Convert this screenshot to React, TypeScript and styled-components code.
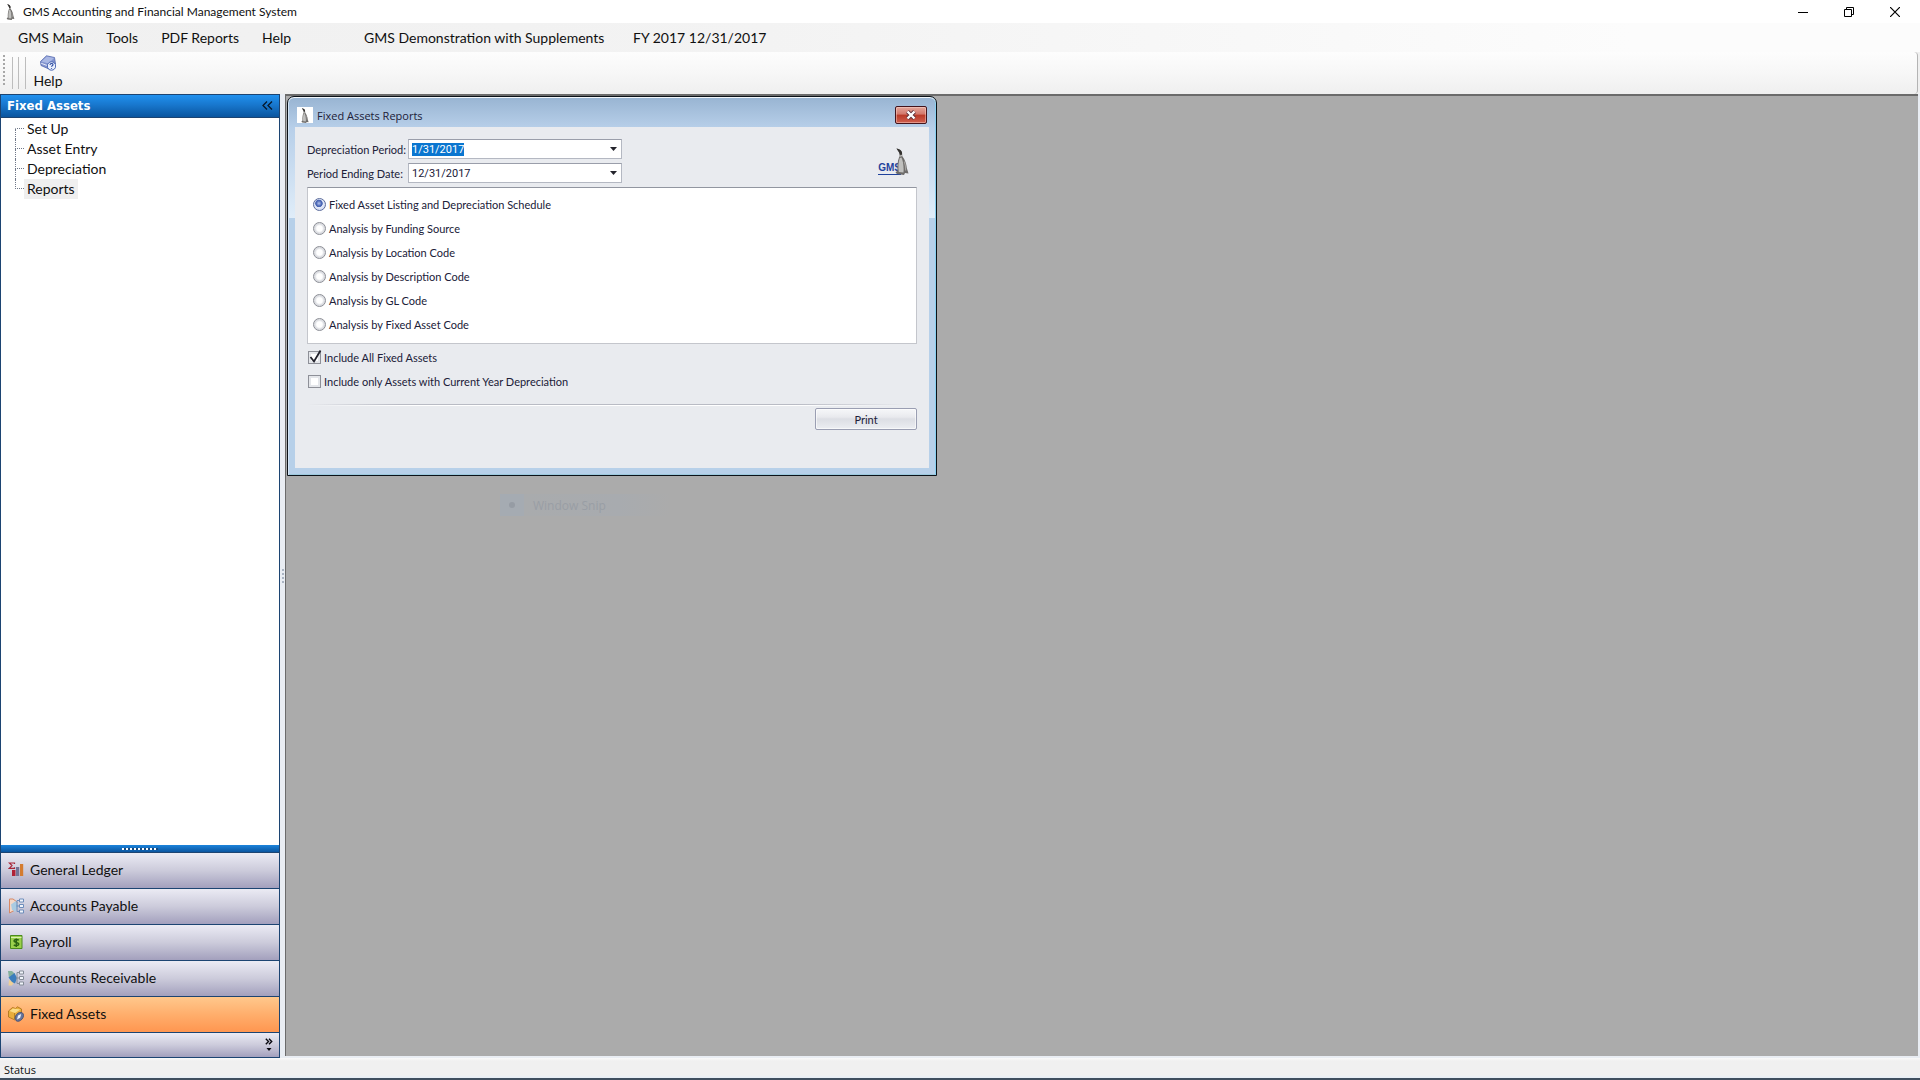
import React, { useEffect, useRef, useState } from "react";
import styled, { createGlobalStyle, css } from "styled-components";

const uiFont = `Lato, "Liberation Sans", sans-serif`;
const smallFont = `"Open Sans", "Liberation Sans", sans-serif`;
const fieldFont = `Roboto, "Liberation Sans", sans-serif`;
const navy = "#1c4472";

const Global = createGlobalStyle`
  *, *::before, *::after { box-sizing: border-box; }
  body { margin: 0; background: #f0f0f0; font-family: ${uiFont}; font-size: 14px; color: #101010; }
  button, input { font: inherit; color: inherit; margin: 0; padding: 0; }
  ul { list-style: none; margin: 0; padding: 0; }
  svg { display: block; }
`;

const Page = styled.div`
  display: flex;
  flex-direction: column;
  height: 100vh;
`;

const TitleBar = styled.header`
  display: flex;
  align-items: center;
  gap: 6px;
  height: 23px;
  padding-left: 4px;
  background: #fff;
`;

const AppTitle = styled.h1`
  flex: 1;
  margin: 0;
  font-size: 12px;
  font-weight: 400;
`;

const WindowButtons = styled.div`
  display: flex;
  padding-right: 2px;
`;

const WindowButton = styled.button`
  display: grid;
  place-items: center;
  width: 46px;
  height: 20px;
  border: 0;
  background: none;
`;

const MenuBar = styled.nav`
  display: flex;
  align-items: center;
  gap: 1px;
  height: 29px;
  padding-left: 7px;
  background: linear-gradient(90deg, #f0f0f0, #f3f3f3 40%, #fcfcfc 85%);
`;

const MenuItem = styled.button`
  padding: 0 11px;
  border: 0;
  background: none;
  line-height: 20px;
`;

const Company = styled.span`
  min-width: 268px;
  margin-left: 50px;
  padding: 0 11px;
`;

const FiscalYear = styled.span`
  padding: 0 11px;
`;

const ToolBar = styled.div`
  display: flex;
  height: 42px;
  margin-right: 2px;
  padding: 3px 0 0 3px;
  border-right: 1px solid #b4b4b4;
  border-radius: 0 4px 4px 0;
  background: linear-gradient(#fdfdfd, #f7f7f7 50%, #efefef);
`;

const DotGrip = styled.span`
  width: 2px;
  height: 32px;
  margin-right: 7px;
  background: repeating-linear-gradient(#a8a8a8 0 2px, transparent 2px 4px);
`;

const LineGrip = styled.span`
  width: 14px;
  height: 32px;
  margin: 2px 6px 0 0;
  border: solid #bdbdbd;
  border-width: 0 1px;
  background: linear-gradient(#bdbdbd, #bdbdbd) 5px 0 / 1px 100% no-repeat;
`;

const ToolButton = styled.button`
  display: flex;
  flex-direction: column;
  align-items: center;
  width: 32px;
  border: 0;
  background: none;
  line-height: 20px;
  height: 36px;
`;

const Workspace = styled.div`
  display: flex;
  flex: 1;
  min-height: 0;
  background: #e9edf3;
`;

const SidePanel = styled.aside`
  display: flex;
  flex-direction: column;
  width: 280px;
  border: solid ${navy};
  border-width: 0 1px;
`;

const PanelHeader = styled.div`
  display: flex;
  align-items: center;
  justify-content: space-between;
  height: 24px;
  padding: 0 6px 2px;
  border: solid ${navy};
  border-width: 1px 0;
  background: linear-gradient(#2090ee, #1877cd 45%, #0a559f);
  color: #fff;
`;

const PanelTitle = styled.h2`
  margin: 0;
  font: bold 13px "DejaVu Sans Condensed", sans-serif;
`;

const IconButton = styled.button`
  border: 0;
  background: none;
`;

const Tree = styled.ul`
  flex: 1;
  padding: 1px 0 0 14px;
  background: #fff;
`;

const TreeRow = styled.li`
  display: flex;
  height: 20px;
`;

const Branch = styled.span<{ $first?: boolean; $last?: boolean }>`
  display: grid;
  grid-template-rows: 10px 10px;
  width: 9px;
  &::before, &::after { content: ""; border-left: 1px dotted #707888; }
  &::before { border-bottom: 1px dotted #707888; }
  ${p => p.$first && css`&::before { border-left-color: transparent; }`}
  ${p => p.$last && css`&::after { border-left-color: transparent; }`}
`;

const TreeLink = styled.a<{ $active?: boolean }>`
  padding: 0 3px;
  background: ${p => (p.$active ? "#efefef" : "none")};
  color: inherit;
  line-height: 20px;
  text-decoration: none;
`;

const SplitBar = styled.div`
  display: grid;
  place-items: center;
  height: 8px;
  border-bottom: 1px solid ${navy};
  background: linear-gradient(#1c84dc, #0a559f);
  &::after {
    content: "";
    width: 36px;
    height: 2px;
    background: repeating-linear-gradient(90deg, #fff 0 2px, #164a80 2px 4px);
  }
`;

const NavButton = styled.button<{ $active?: boolean }>`
  display: flex;
  align-items: center;
  gap: 6px;
  width: 100%;
  height: 36px;
  padding: 0 7px 2px;
  border: 0;
  border-bottom: 1px solid ${navy};
  background: ${p => (p.$active
    ? "linear-gradient(#ffc88c, #ffae6c 50%, #ff9650)"
    : "linear-gradient(#ebebf4, #cccbdb 50%, #a3a0bd)")};
`;

const NavOverflow = styled.div`
  display: flex;
  justify-content: flex-end;
  height: 25px;
  padding: 4px 6px;
  border-bottom: 1px solid ${navy};
  background: linear-gradient(#ebebf4, #cccbdb 50%, #a3a0bd);
`;

const Splitter = styled.div`
  display: grid;
  place-items: center;
  width: 5px;
  &::after {
    content: "";
    width: 2px;
    height: 14px;
    background: repeating-linear-gradient(#aab4c2 0 2px, transparent 2px 4px);
  }
`;

const Desktop = styled.main`
  position: relative;
  flex: 1;
  margin: 0 2px 2px 0;
  border: solid #6b6b6b;
  border-width: 2px 0 0 1px;
  background: #ababab;
`;

const GhostMenu = styled.div`
  position: absolute;
  top: 398px;
  left: 214px;
  display: flex;
  align-items: center;
  gap: 18px;
  width: 170px;
  height: 22px;
  background: linear-gradient(90deg, #a5abb2 0 24px, #a9abad 24px, #a8abaf 70%, #ababab);
  color: #999ea5;
  font-family: ${smallFont};
  font-size: 12px;
  &::before {
    content: "";
    width: 6px;
    height: 6px;
    margin-left: 9px;
    border-radius: 3px;
    background: #969ca4;
  }
`;

const Dialog = styled.section`
  position: absolute;
  top: 0;
  left: 1px;
  width: 650px;
  padding: 0 7px 7px;
  border: 1px solid #0c1218;
  border-radius: 7px 7px 0 0;
  background: linear-gradient(#98b4d2, #b7cfe9 31px, #e0edf9 121px, #b7d0e9 121px);
  box-shadow: inset 0 1px #f2f7fc, inset 1px 0 #d3e4f4, inset -1px 0 #88d0f0, inset 0 -1px #9cc8dc;
  color: #202038;
  font-size: 11px;
`;

const DialogBar = styled.div`
  display: flex;
  align-items: center;
  gap: 4px;
  height: 30px;
  padding: 6px 2px 0;
`;

const DialogIcon = styled.span`
  display: grid;
  place-items: center;
  width: 16px;
  height: 16px;
  background: #fff;
`;

const DialogTitle = styled.h2`
  flex: 1;
  margin: 0;
  font: 400 11px ${smallFont};
`;

const CloseButton = styled.button`
  display: grid;
  place-items: center;
  align-self: flex-start;
  margin-top: 3px;
  width: 32px;
  height: 18px;
  border: 1px solid #43141c;
  border-radius: 2px;
  background: linear-gradient(#e3a69b, #d3786b 45%, #b93a28 50%, #d0604f);
  box-shadow: inset 0 0 0 1px rgba(255, 220, 210, 0.45);
`;

const Form = styled.form`
  padding: 12px 12px 38px;
  background: #e9ebef;
`;

const FormHead = styled.div`
  display: flex;
  align-items: center;
  justify-content: space-between;
  margin-bottom: 4px;
`;

const Fields = styled.div`
  display: grid;
  grid-template-columns: 101px 214px;
  grid-auto-rows: 20px;
  row-gap: 4px;
  align-items: center;
`;

const ComboBox = styled.div`
  display: grid;
  grid-template-columns: 1fr 15px;
  height: 20px;
  border: 1px solid #b4b8c2;
  border-top-color: #9a9eaa;
  background: #fff;
`;

const ComboInput = styled.input`
  min-width: 0;
  padding-left: 3px;
  border: 0;
  outline: 0;
  background: none;
  font-family: ${fieldFont};
  &::selection { background: #0a76d0; color: #fff; }
`;

const ComboButton = styled.button`
  display: grid;
  place-items: center;
  border: 0;
  background: none;
`;

const Brand = styled.div`
  display: flex;
  align-items: flex-end;
  margin-right: 8px;
  color: #1f429c;
  font: bold 10px/12px "Liberation Sans", sans-serif;
`;

const BrandName = styled.span`
  margin-right: -6px;
  border-bottom: 1px solid #1f429c;
`;

const ReportList = styled.fieldset`
  margin: 0;
  padding: 4px 5px 7px;
  border: 1px solid #c4c6cc;
  border-top-color: #9296a0;
  background: #fff;
`;

const Option = styled.label`
  display: flex;
  align-items: center;
  gap: 3px;
  height: 24px;
`;

const Radio = styled.input`
  appearance: none;
  width: 13px;
  height: 13px;
  border: 1px solid #8c8e96;
  border-radius: 50%;
  background: radial-gradient(#fff 35%, #d8dadf 60%, #f4f4f6);
  &:checked {
    border-color: #5c6c9c;
    background: radial-gradient(circle at 45% 40%, #b4c4ee 0, #4a66b4 30%, #4a66b4 38%, #e4eaf8 46%, #c4d0ec);
  }
`;

const Checks = styled.div`
  padding: 1px 0 11px 1px;
`;

const CheckCell = styled.span`
  display: grid;
  width: 13px;
  height: 13px;
  & > * { grid-area: 1 / 1; }
  & > svg { visibility: hidden; pointer-events: none; overflow: visible; }
  & > input:checked + svg { visibility: visible; }
`;

const CheckBox = styled.input`
  appearance: none;
  width: 13px;
  height: 13px;
  border: 1px solid #8e9098;
  background: #fff;
  box-shadow: inset 0 0 0 2px #e4e6ea;
`;

const Divider = styled.hr`
  height: 2px;
  margin: 0 0 2px;
  border: 0;
  background:
    linear-gradient(90deg, transparent, #b9bbc4 15%, #b9bbc4 80%, transparent 98%) 0 0 / 100% 1px no-repeat,
    linear-gradient(90deg, transparent, #fff 15%, #fff 80%, transparent 98%) 0 1px / 100% 1px no-repeat;
`;

const Actions = styled.div`
  display: flex;
  justify-content: flex-end;
`;

const PrintButton = styled.button`
  width: 102px;
  height: 22px;
  border: 1px solid #9a9eb2;
  border-radius: 2px;
  background: linear-gradient(#f6f7f9, #e9eaee 40%, #dcdee4 50%, #eceef2);
  box-shadow: inset 0 0 0 1px rgba(255, 255, 255, 0.6);
`;

const StatusBar = styled.footer`
  height: 22px;
  padding-left: 4px;
  border-bottom: 2px solid #3f4e5e;
  background: linear-gradient(#fafafa, #f0f0f0 3px, #f0f0f0 17px, #e6eef6);
  font: 11px/24px ${smallFont};
`;

const Penguin = ({ w = 14, h = 27 }: { w?: number; h?: number }) => (
  <svg width={w} height={h} viewBox="0 0 14 27" aria-hidden="true">
    <path d="M1.500.500C4 1 6.500 2 7 4.500 7.300 6 7 7 7.500 8.500 10 11.500 11.500 16 11.800 20L13.500 25.500 10 25 9 27 2 26 .500 24.500 2.500 22.500C2.200 18 2.500 13 4 9.500 5 7.500 4.800 5.500 3.500 3.500Z" fill="#6e6c6a" />
    <path d="M4.800 10C3.300 14 3 19 3.800 24L8.500 24.500C9 19 8 13 6.500 9.500Z" fill="#c0c0be" />
    <path d="M9.200 13.500C10.400 16.500 10.800 19.500 10.600 22.500" stroke="#a2a09e" strokeWidth="1.200" fill="none" />
    <path d="M1.500.500C4 1 6.500 2 7 4.500L7 6.500 4.800 6.800C4.700 5.500 4.300 4.500 3.500 3.500Z" fill="#33312f" />
    <path d="M4.600 8.200 7.200 7.600" stroke="#dededc" strokeWidth=".9" />
  </svg>
);

const Arrow = () => (
  <svg width="7" height="4" viewBox="0 0 7 4" aria-hidden="true"><path d="M0 0h7L3.500 4Z" fill="#24242c" /></svg>
);

const HelpBookIcon = () => (
  <svg width="16" height="16" viewBox="0 0 16 16" aria-hidden="true">
    <path d="M.5 6.500 6.500.8 14.500 2.500 15.500 9 9 14 1 10.500Z" fill="#8394cf" stroke="#5468ae" strokeWidth=".8" />
    <path d="M1.500 6.500 6.800 1.600 14 3 8.500 8.400Z" fill="#aab8e4" />
    <path d="M1.200 8.300 8.500 11" stroke="#e6eaf8" />
    <circle cx="11.500" cy="11" r="4.200" fill="#eaf0fd" stroke="#4864b2" />
    <path d="M10 10c0-2 3-2 3-.3 0 1-1.500 1-1.500 2.100M11.500 13v.8" stroke="#2d4aa0" strokeWidth="1.100" fill="none" />
  </svg>
);

const LedgerIcon = () => (
  <svg width="16" height="16" viewBox="0 0 16 16" aria-hidden="true">
    <path d="M6.500 2V1H1.300l2.700 2.600-2.700 2.700h5.200v-1" fill="none" stroke="#a82638" strokeWidth="1.200" />
    <path d="M4 8h3.500v6H4z" fill="#b02236" /><path d="M8 5h3.200v9H8z" fill="#737496" /><path d="M12 2h3.200v12H12z" fill="#d47c30" />
  </svg>
);

const Boxes = ({ color }: { color: string }) => (
  <g fill="#f0f4fa" stroke={color}>
    <path d="M8.500 8h3M9 2.500v11M9 2.500h2.500M9 13.500h2.500" fill="none" />
    <path d="M11.500 1h4v3h-4zM11.500 6.500h4v3h-4zM11.500 12h4v3h-4z" />
  </g>
);

const PayableIcon = () => (
  <svg width="16" height="16" viewBox="0 0 16 16" aria-hidden="true">
    <path d="M1.500 1H5l4 3-2 8-5.500 3Z" fill="#f3d8c8" stroke="#d88864" />
    <path d="M3 6.500 8 3l2.500 5L7 14l-3-2.500Z" fill="#a9cbe2" />
    <Boxes color="#6d8dbb" />
  </svg>
);

const ReceivableIcon = () => (
  <svg width="16" height="16" viewBox="0 0 16 16" aria-hidden="true">
    <path d="M0 1h4l3 3-6 4Z" fill="#84b09c" /><path d="M1 10 6 12 4 15.500H.5Z" fill="#edcf98" />
    <path d="M.5 7.500 6.500 3 9 8l-2 5.500-3-1.500Z" fill="#3c7dbc" />
    <Boxes color="#858d98" />
  </svg>
);

const PayrollIcon = () => (
  <svg width="16" height="16" viewBox="0 0 16 16" aria-hidden="true">
    <path d="M2.500 1.500h11.500v13H2.500z" fill="#9bd04c" stroke="#4a8a1e" />
    <path d="M3 3.500h10.500" stroke="#d9f0b0" />
    <path d="M10.800 6.200C9.500 5 6 5.200 6 7s4.800 1.200 4.800 3-3.500 2-5 .8M8.300 4.500v8.500" fill="none" stroke="#2c6412" strokeWidth="1.500" />
  </svg>
);

const AssetsIcon = () => (
  <svg width="16" height="16" viewBox="0 0 16 16" aria-hidden="true">
    <path d="M.5 5 4.500 1.500l3 1L9.500.8l4 2.200V9L6.500 13.800.5 11Z" fill="#e9ae3c" stroke="#a87018" strokeWidth=".8" />
    <path d="M1.500 5 5 2.500 12.500 3.500 7 7Z" fill="#fbdc86" />
    <path d="M6.500 7v6" stroke="#a87018" strokeWidth=".7" />
    <ellipse cx="11.300" cy="10.800" rx="3.600" ry="5" transform="rotate(40 11.300 10.800)" fill="#66759c" stroke="#454f72" strokeWidth=".8" />
    <path d="m9 13.500 1-4 3.200-1.500-1 3.800Z" fill="#edf2fb" />
  </svg>
);

const tree = ["Set Up", "Asset Entry", "Depreciation", "Reports"];
const modules = [
  { name: "General Ledger", icon: <LedgerIcon /> },
  { name: "Accounts Payable", icon: <PayableIcon /> },
  { name: "Payroll", icon: <PayrollIcon /> },
  { name: "Accounts Receivable", icon: <ReceivableIcon /> },
  { name: "Fixed Assets", icon: <AssetsIcon /> },
];
const reports = [
  "Fixed Asset Listing and Depreciation Schedule",
  "Analysis by Funding Source",
  "Analysis by Location Code",
  "Analysis by Description Code",
  "Analysis by GL Code",
  "Analysis by Fixed Asset Code",
];

function Combo({ id, value, selected }: { id: string; value: string; selected?: boolean }) {
  const ref = useRef<HTMLInputElement>(null);
  useEffect(() => {
    if (selected) {
      ref.current?.focus();
      ref.current?.select();
    }
  }, [selected]);
  return (
    <ComboBox>
      <ComboInput id={id} ref={ref} role="combobox" aria-expanded={false} defaultValue={value} />
      <ComboButton type="button" tabIndex={-1} aria-label="Open list"><Arrow /></ComboButton>
    </ComboBox>
  );
}

function ReportsDialog() {
  const [report, setReport] = useState(0);
  return (
    <Dialog role="dialog" aria-labelledby="dialog-title">
      <DialogBar>
        <DialogIcon><Penguin w={8} h={15} /></DialogIcon>
        <DialogTitle id="dialog-title">Fixed Assets Reports</DialogTitle>
        <CloseButton aria-label="Close dialog">
          <svg width="12" height="10" viewBox="0 0 12 10">
            <path d="m2.500 1.500 7 7m0-7-7 7" stroke="#5c3038" strokeWidth="4" />
            <path d="m2.500 1.500 7 7m0-7-7 7" stroke="#fff" strokeWidth="2.400" />
          </svg>
        </CloseButton>
      </DialogBar>
      <Form onSubmit={e => e.preventDefault()}>
        <FormHead>
          <Fields>
            <label htmlFor="period">Depreciation Period:</label>
            <Combo id="period" value="1/31/2017" selected />
            <label htmlFor="ending">Period Ending Date:</label>
            <Combo id="ending" value="12/31/2017" />
          </Fields>
          <Brand><BrandName>GMS</BrandName><Penguin /></Brand>
        </FormHead>
        <ReportList aria-label="Report">
          {reports.map((name, i) => (
            <Option key={name}>
              <Radio type="radio" name="report" checked={report === i} onChange={() => setReport(i)} />
              {name}
            </Option>
          ))}
        </ReportList>
        <Checks>
          {["Include All Fixed Assets", "Include only Assets with Current Year Depreciation"].map((name, i) => (
            <Option key={name}>
              <CheckCell>
                <CheckBox type="checkbox" defaultChecked={i === 0} />
                <svg width="13" height="13" viewBox="0 0 13 13"><path d="m2.500 6 3.500 4.500L12.500-.5" fill="none" stroke="#22222c" strokeWidth="1.800" /></svg>
              </CheckCell>
              {name}
            </Option>
          ))}
        </Checks>
        <Divider />
        <Actions><PrintButton>Print</PrintButton></Actions>
      </Form>
    </Dialog>
  );
}

export default function App() {
  return (
    <Page>
      <Global />
      <TitleBar>
        <Penguin w={13} h={16} />
        <AppTitle>GMS Accounting and Financial Management System</AppTitle>
        <WindowButtons>
          <WindowButton aria-label="Minimize"><svg width="10" height="10"><path d="M0 5.500h10" stroke="#000" /></svg></WindowButton>
          <WindowButton aria-label="Restore"><svg width="10" height="10" fill="none" stroke="#000"><path d="M.5 2.500h7v7h-7zM2.500 2.500v-2h7v7h-2" /></svg></WindowButton>
          <WindowButton aria-label="Close"><svg width="10" height="10"><path d="m0 0 10 10M10 0 0 10" stroke="#000" strokeWidth="1.200" /></svg></WindowButton>
        </WindowButtons>
      </TitleBar>
      <MenuBar>
        {["GMS Main", "Tools", "PDF Reports", "Help"].map(m => <MenuItem key={m}>{m}</MenuItem>)}
        <Company>GMS Demonstration with Supplements</Company>
        <FiscalYear>FY 2017 12/31/2017</FiscalYear>
      </MenuBar>
      <ToolBar>
        <DotGrip />
        <LineGrip />
        <ToolButton><HelpBookIcon />Help</ToolButton>
      </ToolBar>
      <Workspace>
        <SidePanel>
          <PanelHeader>
            <PanelTitle>Fixed Assets</PanelTitle>
            <IconButton aria-label="Collapse panel">
              <svg width="11" height="9" viewBox="0 0 11 9"><path d="M5 .5 1 4.500l4 4M10 .5 6 4.500l4 4" fill="none" stroke="#06182c" strokeWidth="1.300" /></svg>
            </IconButton>
          </PanelHeader>
          <Tree>
            {tree.map((t, i) => (
              <TreeRow key={t}>
                <Branch $first={i === 0} $last={i === tree.length - 1} />
                <TreeLink href="#" $active={t === "Reports"}>{t}</TreeLink>
              </TreeRow>
            ))}
          </Tree>
          <SplitBar />
          {modules.map(m => <NavButton key={m.name} $active={m.name === "Fixed Assets"}>{m.icon}{m.name}</NavButton>)}
          <NavOverflow>
            <IconButton aria-label="Configure buttons">
              <svg width="8" height="14" viewBox="0 0 8 14"><path d="m.8.800 2.700 2.700L.8 6.200M4 .8l2.700 2.700L4 6.200" fill="none" stroke="#080810" strokeWidth="1.400" /><path d="M1.500 10h5L4 13Z" fill="#080810" /></svg>
            </IconButton>
          </NavOverflow>
        </SidePanel>
        <Splitter />
        <Desktop>
          <GhostMenu aria-hidden="true">Window Snip</GhostMenu>
          <ReportsDialog />
        </Desktop>
      </Workspace>
      <StatusBar>Status</StatusBar>
    </Page>
  );
}
